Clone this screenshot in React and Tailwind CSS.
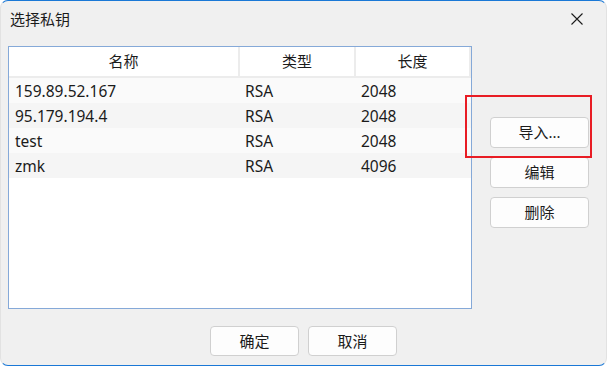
import React from "react";

const rows = [
  ["159.89.52.167", "RSA", "2048"],
  ["95.179.194.4", "RSA", "2048"],
  ["test", "RSA", "2048"],
  ["zmk", "RSA", "4096"],
];

function Btn({ children, className = "" }) {
  return (
    <div
      className={
        "flex items-center justify-center rounded-[4px] border border-[#d0d0d0] bg-[#fdfdfd] text-[15px] text-[#1b1b1b] " +
        className
      }
    >
      {children}
    </div>
  );
}

export default function App() {
  return (
    <div
      className="relative flex h-[366px] w-[607px] flex-col overflow-hidden rounded-[8px] border border-[#1a78d6] border-x-[#e2e2e2] bg-[#f0f0f0] text-[#1b1b1b]"
      style={{ fontFamily: '"Noto Sans", "Noto Sans CJK SC", sans-serif' }}
    >
      {/* title bar */}
      <div className="flex h-[45px] shrink-0 items-start justify-between pl-[9px] pr-[22px] pt-[7px]">
        <div className="text-[15px] leading-[22px]">选择私钥</div>
        <svg width="14" height="14" viewBox="0 0 14 14" className="mt-[4px]">
          <path d="M1.5 1.5 L12.5 12.5 M12.5 1.5 L1.5 12.5" stroke="#1b1b1b" strokeWidth="1.1" />
        </svg>
      </div>

      {/* body */}
      <div className="flex pl-[7px]">
        <div className="flex h-[263px] w-[464px] flex-col border border-[#85a9d8] bg-white">
          {/* header */}
          <div className="flex h-[31px] shrink-0 border-b-2 border-[#ececec] text-[15px]">
            <div className="flex w-[231px] items-center justify-center border-r-2 border-[#ececec]">名称</div>
            <div className="flex w-[116px] items-center justify-center border-r-2 border-[#ececec]">类型</div>
            <div className="flex flex-1 items-center justify-center border-r-2 border-[#ececec]">长度</div>
          </div>
          {rows.map((r, i) => (
            <div
              key={i}
              className={
                "flex h-[25px] items-center pt-[2px] text-[15.5px] " +
                (i % 2 === 0 ? "bg-[#fafafa]" : "bg-[#f5f5f5]")
              }
            >
              <div className="w-[231px] pl-[6px]">{r[0]}</div>
              <div className="w-[116px] pl-[5px]">{r[1]}</div>
              <div className="flex-1 pl-[5px]">{r[2]}</div>
            </div>
          ))}
        </div>

        <div className="ml-[18px] flex flex-col gap-[9px] pt-[71px]">
          <Btn className="h-[31px] w-[99px]">导入...</Btn>
          <Btn className="h-[31px] w-[99px]">编辑</Btn>
          <Btn className="h-[31px] w-[99px]">删除</Btn>
        </div>
      </div>

      {/* bottom buttons */}
      <div className="mt-[17px] flex justify-center gap-[9px]">
        <Btn className="h-[30px] w-[89px]">确定</Btn>
        <Btn className="h-[30px] w-[89px]">取消</Btn>
      </div>

      {/* red highlight */}
      <div className="absolute left-[464px] top-[94px] h-[63px] w-[127px] border-2 border-[#e81c24]" />
    </div>
  );
}
